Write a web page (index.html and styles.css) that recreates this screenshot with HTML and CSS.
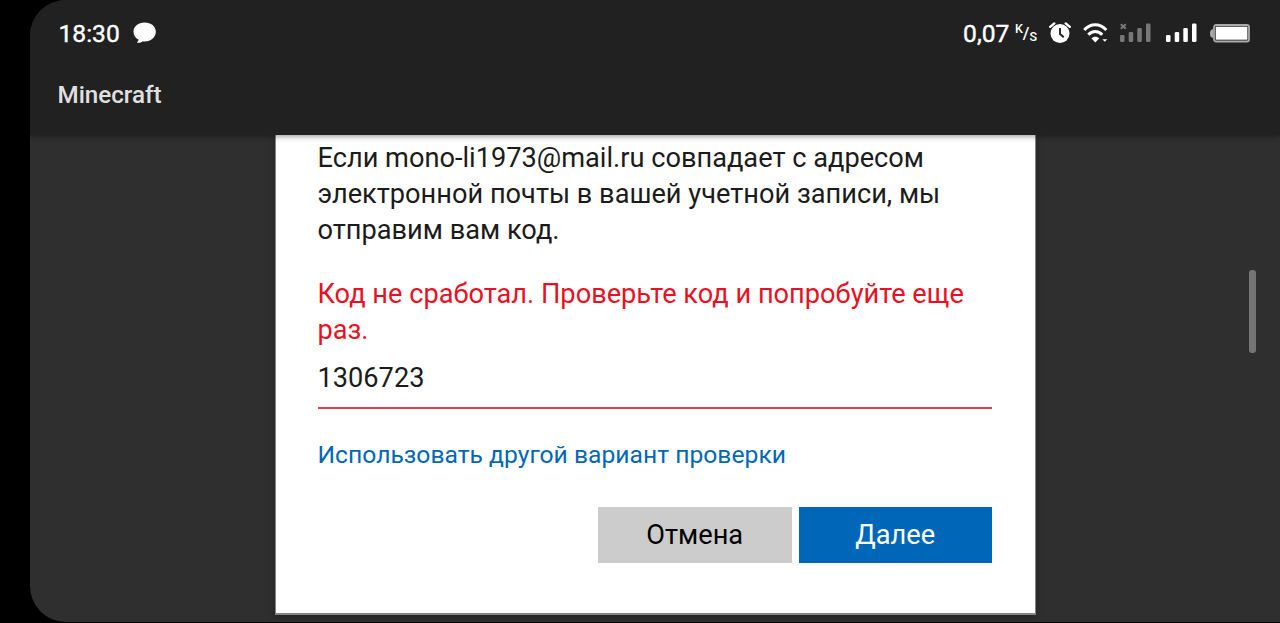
FILE: index.html
```html
<!DOCTYPE html>
<html lang="ru">
  <head>
    <meta charset="UTF-8" />
    <meta name="viewport" content="width=device-width, initial-scale=1.0" />
    <title>Minecraft</title>
    <link rel="stylesheet" href="styles.css">
  </head>
  <body>
    <div class="screen">
      <header class="top">
        <div class="status-bar">
          <div class="status-left">
            <span class="time">18:30</span>
            <svg class="chat" width="24" height="22" viewBox="0 0 24 22">
              <path fill="#fff" d="M11.500 0.500C5.200.5.500 4.500.500 9.700c0 3.400 1.900 6.200 4.900 7.900 0 1.500-.7 2.400-1.600 3.200 2.500.2 4.600-.5 6-1.600.7.100 1.200.200 1.900.2 6.600 0 11.100-4.300 11.100-9.700S18.100.5 11.500.5z" />
            </svg>
          </div>
          <div class="status-right">
            <span class="speed">0,07</span>
            <span class="unit"><span class="unit-k">K</span><span class="unit-slash">/</span><span class="unit-s">S</span></span>
            <svg class="alarm" width="22" height="22" viewBox="0 0 22 22">
              <circle cx="11" cy="11.500" r="9.500" fill="#fff" />
              <path d="M1.200 4.800 5.300 1.400M20.800 4.800 16.700 1.400" stroke="#fff" stroke-width="2.400" stroke-linecap="round" />
              <path d="M11 6v6l3.800 3.200" fill="none" stroke="#212121" stroke-width="1.900" />
            </svg>
            <svg class="wifi" width="25" height="20" viewBox="0 0 25 20">
              <path d="M1.200 7.100C7.500-.1 17-.1 23.300 7.100M5.300 11.800c4.100-4.300 9.800-4.300 13.900 0" fill="none" stroke="#fff" stroke-width="3" />
              <path fill="#fff" d="M8.300 15.300c2.300-2.100 5.700-2.100 8 0L12.300 19.500zM19.300 16.200h5L21.800 18.700z" />
            </svg>
            <svg class="no-signal" width="31" height="20" viewBox="0 0 31 20">
              <path d="M.8 1.200l5 4.600M5.800 1.200L.8 5.800" stroke="#777" stroke-width="2" />
              <g fill="#777">
                <rect x="0" y="12" width="4.500" height="7" rx="1.300" />
                <rect x="8.700" y="9" width="4.500" height="10" rx="1.300" />
                <rect x="17.300" y="5" width="4.500" height="14" rx="1.300" />
                <rect x="26" y="0.500" width="4.500" height="18.500" rx="1.300" />
              </g>
            </svg>
            <svg class="signal" width="31" height="20" viewBox="0 0 31 20">
              <g fill="#fff">
                <rect x="0" y="12" width="4.500" height="7" rx="1.300" />
                <rect x="8.700" y="9" width="4.500" height="10" rx="1.300" />
                <rect x="17.300" y="5" width="4.500" height="14" rx="1.300" />
                <rect x="26" y="0.500" width="4.500" height="18.500" rx="1.300" />
              </g>
            </svg>
            <svg class="battery" width="40" height="19" viewBox="0 0 40 19">
              <path d="M3 5C1.200 5.300 0 6.800 0 9.500s1.200 4.200 3 4.500z" fill="#aaa" />
              <rect x="4" y="1" width="35" height="16.500" rx="2" fill="#212121" stroke="#aaa" stroke-width="1.800" />
              <rect x="5.700" y="2.700" width="31.700" height="13" fill="#fff" />
            </svg>
          </div>
        </div>
        <div class="app-title">Minecraft</div>
      </header>

      <main class="content">
        <div class="card">
          <p class="message">Если mono-li1973@mail.ru совпадает с адресом<br>электронной почты в вашей учетной записи, мы<br>отправим вам код.</p>
          <p class="error">Код не сработал. Проверьте код и попробуйте еще<br>раз.</p>
          <div class="code">1306723</div>
          <a class="link">Использовать другой вариант проверки</a>
          <div class="buttons">
            <button class="cancel">Отмена</button>
            <button class="next">Далее</button>
          </div>
        </div>
        <div class="scrollbar"></div>
      </main>
    </div>
  </body>
</html>
```

FILE: styles.css
```css
body {
  margin: 0;
  height: 623px;
  background-color: #000;
  font-family: Roboto, sans-serif;
  overflow: hidden;
}

.screen {
  box-sizing: border-box;
  height: 622px;
  margin-left: 29.5px;
  background-color: #2f2f2f;
  border-radius: 36px 0 0 36px;
  overflow: hidden;
  display: flex;
  flex-direction: column;
}

.top {
  position: relative;
  box-sizing: border-box;
  height: 135px;
  flex-shrink: 0;
  background-color: #212121;
  box-shadow: 0 1px 6px rgba(0, 0, 0, 0.45);
}

.status-bar {
  display: flex;
  justify-content: space-between;
  height: 66px;
  padding: 0 30px 0 29px;
  color: #fff;
}

.status-left,
.status-right {
  display: flex;
  align-items: center;
}

.time,
.speed {
  font-size: 24.6px;
  line-height: 65px;
  -webkit-text-stroke: 0.4px #fff;
}

.chat {
  margin-left: 13px;
}

.unit {
  display: flex;
  align-items: center;
  margin: 0 12px 0 5.5px;
  font-weight: 500;
  line-height: 20px;
}

.unit-k {
  font-size: 12.5px;
  padding-bottom: 9px;
}

.unit-slash {
  font-size: 17px;
}

.unit-s {
  font-size: 12.5px;
  padding-top: 8px;
}

.wifi {
  margin-left: 12px;
}

.no-signal {
  margin-left: 12px;
}

.signal {
  margin-left: 15px;
}

.battery {
  margin-left: 13px;
}

.app-title {
  padding-left: 28px;
  font-size: 24.2px;
  font-weight: 500;
  line-height: 58px;
  color: #e0e0e0;
}

.content {
  flex: 1;
  display: flex;
  align-items: flex-start;
}

.card {
  box-sizing: border-box;
  width: 761px;
  height: 480px;
  margin-left: 245px;
  padding: 5px 42.5px 0 42px;
  background-color: #fff;
  border: 1px solid #858585;
  border-top: none;
  border-bottom-width: 2px;
  box-shadow: 0 2px 7px rgba(0, 0, 0, 0.25);
  color: #1b1b1b;
  font-size: 27.2px;
  line-height: 36px;
}

.message,
.error {
  margin: 0;
  white-space: nowrap;
}

.error {
  margin-top: 28px;
  color: #e81123;
}

.code {
  height: 47px;
  margin-top: 12px;
  border-bottom: 2px solid #e0404d;
}

.link {
  display: block;
  margin-top: 28px;
  font-size: 24.68px;
  color: #0067b8;
}

.buttons {
  display: flex;
  justify-content: flex-end;
  gap: 7px;
  margin-top: 34px;
}

.buttons button {
  width: 193.5px;
  height: 56px;
  padding: 0;
  border: none;
  font-family: inherit;
  font-size: 27.2px;
}

.cancel {
  background-color: #ccc;
  color: #000;
}

.next {
  background-color: #0067b8;
  color: #fff;
}

.scrollbar {
  width: 7px;
  height: 83px;
  margin: 135px 0 0 213px;
  border-radius: 3px;
  background-color: #757575;
}
```
